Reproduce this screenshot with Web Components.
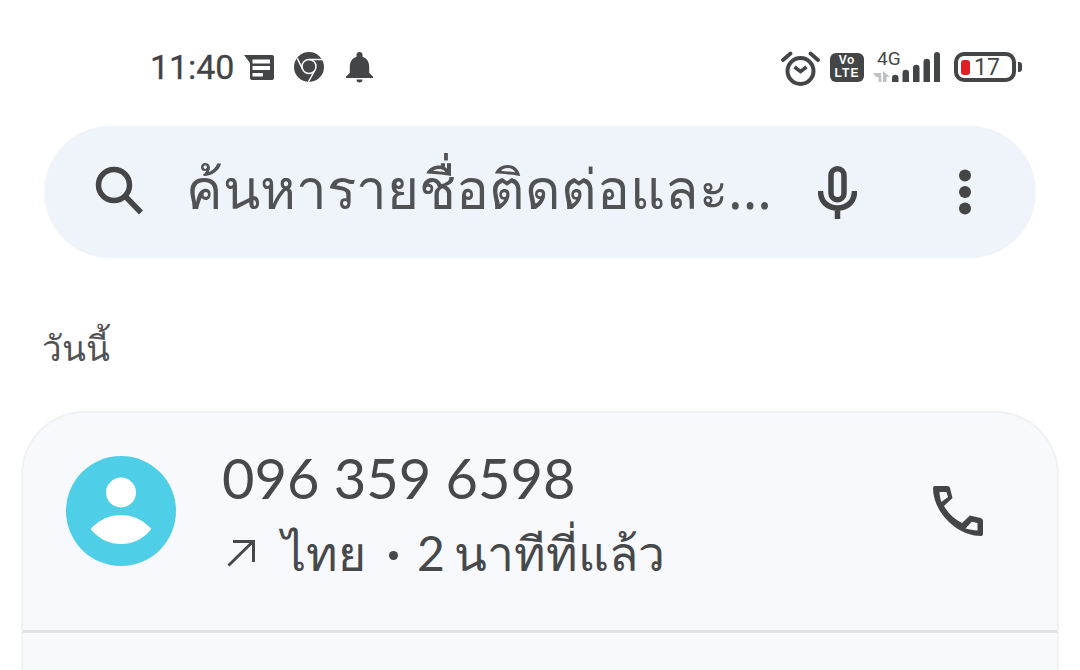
<!DOCTYPE html>
<html><head><meta charset="utf-8"><style>
html,body{margin:0;padding:0;background:#fff}
body{width:1080px;height:670px;overflow:hidden;font-family:"Lato","Noto Sans",sans-serif;color:#46484a}
</style></head><body>
<phone-screen>
<status-bar></status-bar>
<search-bar placeholder="ค้นหารายชื่อติดต่อและ..."></search-bar>
<section-label>วันนี้</section-label>
<call-card><call-row number="096 359 6598" detail="ไทย"  time="2 นาทีที่แล้ว"></call-row></call-card>
</phone-screen>
<script>
function def(name,html){customElements.define(name,class extends HTMLElement{connectedCallback(){if(this.shadowRoot)return;const r=this.attachShadow({mode:'open'});r.innerHTML=typeof html==='function'?html(this):html;}});}
def('phone-screen',`<style>:host{display:flex;flex-direction:column;width:1080px;height:670px;overflow:hidden}</style><slot></slot>`);
def('status-bar',`<style>
:host{display:flex;align-items:center;height:126px;box-sizing:border-box;padding:8px 58px 0 150px;flex:none}
.t{font:400 34px/1 Roboto,sans-serif;color:#414345;width:94px;letter-spacing:-.1px;-webkit-text-stroke:.3px #414345}
.l,.r{display:flex;align-items:center}
.sp{flex:1}svg{display:block;flex:none}
.n4{font:400 19px/1 Roboto,sans-serif;color:#46484a;position:absolute;left:4px;top:-3px}
.v{width:34px;height:29px;background:#434547;border-radius:6px;margin-right:9px;color:#fff;font:700 12px/13px "Liberation Sans",sans-serif;letter-spacing:1px;text-align:center;display:block;padding-top:1.500px;box-sizing:border-box}
.v b{display:block;font-weight:700}
</style>
<div class="l"><span class="t">11:40</span>
<svg width="30" height="25" viewBox="0 0 30 25" style="margin-right:20px"><path d="M0 0h28a2 2 0 0 1 2 2v21a2 2 0 0 1-2 2H8a2 2 0 0 1-2-2V8z" fill="#434547"/><path d="M8.500 4.500h17.500v4H8.500zM8.500 11h17.500v4H8.500zM8.500 18h10.500v3.500H8.500z" fill="#fff"/></svg>
<svg width="30" height="30" viewBox="0 0 30 30" style="margin-right:22px"><circle cx="15" cy="15" r="15" fill="#434547"/><circle cx="15" cy="14.500" r="7" fill="none" stroke="#fff" stroke-width="1.500"/><path d="M15 7.500h14M9 18 3.300 6.300M21 18 14.300 30" stroke="#fff" stroke-width="1.500" fill="none"/></svg>
<svg width="27" height="31" viewBox="0 0 27 31"><path d="M13.500 0a3 3 0 0 1 3 3v1.800c4.500 1.400 6.700 5.300 6.700 10v6l3.800 4v1.200H0v-1.200l3.800-4v-6c0-4.700 2.200-8.600 6.700-10V3a3 3 0 0 1 3-3z" fill="#434547"/><path d="M10.500 27.500h6a3 3 0 0 1-6 0z" fill="#434547"/></svg></div>
<span class="sp"></span>
<div class="r">
<svg width="39" height="38" viewBox="0 0 39 38" style="margin-right:10px;margin-top:4px"><circle cx="19.500" cy="21" r="13" fill="none" stroke="#434547" stroke-width="4"/><path d="M13.500 17l6 4.500 6-4.500" fill="none" stroke="#434547" stroke-width="3.500"/><path d="M2 10 9.500 3.500M37 10 29.500 3.500" stroke="#434547" stroke-width="3.800" stroke-linecap="round"/></svg>
<span class="v"><b>Vo</b><b>LTE</b></span>
<span style="display:block;margin-right:14px;width:67px;height:30px;position:relative">
<span class="n4">4G</span>
<svg width="67" height="30" viewBox="0 0 67 30" style="position:absolute;left:0;top:0"><path d="M0 21h8l.5 9H5.500l0-5L3 25zM10 30V19l7 6h-3.500v5z" fill="#bfc1c3"/><path d="M19 30v-4a3 3 0 0 1 6.500 0v4zM29.500 30v-9a3 3 0 0 1 6.500 0v9zM40 30V16a3 3 0 0 1 6.500 0v14zM50.500 30V10a3 3 0 0 1 6.500 0v20zM61 30V3a3 3 0 0 1 6 0v27z" fill="#434547"/></svg>
</span>
<span style="display:flex;align-items:center">
<span style="width:62px;height:30px;box-sizing:border-box;border:4px solid #434547;border-radius:10px;display:flex;align-items:center;padding-left:3px;font:400 23px/1 Roboto,sans-serif;color:#46484a"><i style="width:9px;height:15px;background:#e01e24;border-radius:3px;display:block;margin-right:4px;flex:none"></i>17</span>
<i style="width:4px;height:10px;background:#434547;border-radius:0 3px 3px 0;margin-left:2px;display:block"></i></span>
</div>`);
def('search-bar',h=>`<style>
:host{display:flex;align-items:center;flex:none;height:132px;margin:0 44px;background:#eff4fa;border-radius:66px;padding-left:50px}
svg{display:block;flex:none}
.p{font:400 54.700px/1 "Noto Sans","Lato",sans-serif;color:#505254;margin-left:40px;width:601px;white-space:nowrap;position:relative;top:-4px}
</style>
<svg width="52" height="52" viewBox="0 0 52 52"><circle cx="20" cy="19" r="15.500" fill="none" stroke="#434547" stroke-width="5.500"/><path d="M30.500 29.500 47 46.500" stroke="#434547" stroke-width="5.500"/></svg>
<span class="p">${h.getAttribute('placeholder')}</span>
<svg width="39" height="53" viewBox="0 0 39 53" style="margin-left:31px"><rect x="13" y="2.800" width="13" height="31" rx="6.500" fill="none" stroke="#434547" stroke-width="5.500"/><path d="M2.500 25c0 11 7.500 17 17 17S36.500 36 36.500 25M19.500 41v12" fill="none" stroke="#434547" stroke-width="5.500"/></svg>
<svg width="16" height="48" viewBox="0 0 16 48" style="margin-left:100px"><circle cx="8" cy="7.500" r="6" fill="#434547"/><circle cx="8" cy="24" r="6" fill="#434547"/><circle cx="8" cy="40.500" r="6" fill="#434547"/></svg>`);
def('section-label',`<style>:host{display:block;flex:none;margin:62px 42px 0;height:91px;font:400 35px/56px "Noto Sans","Lato",sans-serif;color:#505254}</style><slot></slot>`);
def('call-card',`<style>:host{display:block;flex:1;margin:0 21px;background:#f8f9fc;border:2px solid #f0f1f3;border-bottom:0;border-radius:64px 64px 0 0}</style><slot></slot>`);
def('call-row',h=>`<style>
:host{display:flex;align-items:center;height:220px;box-sizing:border-box;border-bottom:3px solid #e2e3e4;padding-left:43px;padding-bottom:22px}
svg{display:block;flex:none}
.x{margin-left:46px;width:711px;padding-top:8px}
.n{font:400 56px/62px Lato,"Noto Sans",sans-serif;color:#46484a}
.d{font:400 48px/60px Lato,"Noto Sans",sans-serif;color:#46484a;display:flex;align-items:center;white-space:nowrap;margin-top:14px;word-spacing:-3px}
.b{display:inline-block;width:9px;height:9px;border-radius:50%;background:#46484a;margin:6px 19px 0 23px;flex:none}
</style>
<svg width="110" height="110" viewBox="0 0 110 110"><circle cx="55" cy="55" r="55" fill="#4fcee8"/><circle cx="55" cy="36.500" r="15" fill="#fff"/><path d="M26.500 73C34 65 44 60.500 55 60.500S76 65 83.500 73C76 81.500 66 86.500 55 86.500S34 81.500 26.500 73z" fill="#fff" stroke="#fff" stroke-width="3" stroke-linejoin="round"/></svg>
<div class="x"><div class="n">${h.getAttribute('number')}</div>
<div class="d"><svg width="28" height="28" viewBox="0 0 28 28" style="margin:0 27px 0 5px"><path d="M1.500 26.500 26 2.500M6 2.500h20.500v20.500" fill="none" stroke="#46484a" stroke-width="3"/></svg>${h.getAttribute('detail')}<i class="b"></i>${h.getAttribute('time')}</div></div>
<svg width="50" height="50" viewBox="0 0 50 50"><path fill-rule="evenodd" d="M2 0h12a3 3 0 0 1 3 2l2.500 10-8.500 8c4 7 10 13 18 17l8-7.500 10.500 2.500a3 3 0 0 1 2.500 3v13a2 2 0 0 1-2 2C24 50 0 26 0 2a2 2 0 0 1 2-2zM6.500 6c0 3 .8 6.500 1.800 10l6.800-5-1.700-5zM32.500 42.500c4 1.200 8 1.800 12 2v-7.500l-5.700-1.200z" fill="#434547"/></svg>`);
</script>
</body></html>
